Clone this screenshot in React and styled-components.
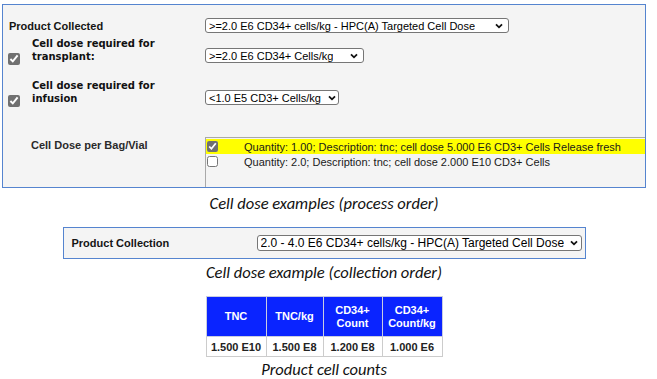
import React from "react";
import styled, { createGlobalStyle } from "styled-components";

const GlobalStyle = createGlobalStyle`
  html, body { margin: 0; padding: 0; background: #ffffff; }
  body { font-family: "Liberation Sans", Arial, sans-serif; color: #111; }
`;

const Page = styled.div`
  width: 644px;
  padding: 4px 0 0 2px;
  display: flex;
  flex-direction: column;
  align-items: center;
`;

const Panel = styled.div`
  box-sizing: border-box;
  width: ${(p) => p.$w}px;
  height: ${(p) => p.$h}px;
  border: 1px solid #5584cf;
  background: #f4f4f4;
  margin-top: ${(p) => p.$mt || 0}px;
  display: flex;
  flex-direction: column;
`;

const Row = styled.div`
  display: grid;
  grid-template-columns: 202px auto;
  align-items: ${(p) => p.$align || "start"};
  justify-items: start;
  margin-top: ${(p) => p.$mt}px;
  ${(p) => (p.$grow ? "flex: 1; align-items: stretch; justify-items: stretch;" : "")}
`;

const PlainLabel = styled.div`
  font-size: 11px;
  font-weight: bold;
  color: ${(p) => p.$color || "#151515"};
  padding-left: ${(p) => p.$pl}px;
  padding-top: ${(p) => p.$pt || 0}px;
  line-height: 14px;
`;

const CheckLabel = styled.div`
  display: flex;
  align-items: flex-end;
  padding-left: 5px;
  gap: 12px;
`;

const Check = styled.input.attrs({ type: "checkbox", readOnly: true })`
  width: 12px;
  height: 12px;
  margin: 0 0 -2px 0;
  accent-color: #707070;
  flex-shrink: 0;
`;

const VerdanaText = styled.div`
  font-family: "DejaVu Sans", Verdana, sans-serif;
  font-weight: bold;
  font-size: 10px;
  line-height: 12.5px;
  color: #111;
`;

const SelectBox = styled.div`
  box-sizing: border-box;
  display: flex;
  align-items: center;
  justify-content: space-between;
  font-family: "Liberation Sans", Arial, sans-serif;
  font-size: ${(p) => p.$fs || 11}px;
  color: #000;
  background: #fff;
  width: ${(p) => p.$w}px;
  height: ${(p) => p.$h || 15}px;
  margin-top: ${(p) => p.$mt || 0}px;
  padding: 0 ${(p) => p.$pr || 4}px 0 3px;
  border: 1px solid #767676;
  border-radius: 3px;
  white-space: nowrap;
  overflow: hidden;
`;

const SelectText = styled.span`
  min-width: 0;
  overflow: hidden;
`;

const Chevron = () => (
  <svg width="8" height="6" viewBox="0 0 8 6" aria-hidden="true" style={{ flexShrink: 0 }}>
    <path d="M1 1.3 L4 4.3 L7 1.3" fill="none" stroke="#111" strokeWidth="1.8" />
  </svg>
);

const Dropdown = ({ children, ...rest }) => (
  <SelectBox role="combobox" {...rest}>
    <SelectText>{children}</SelectText>
    <Chevron />
  </SelectBox>
);

const ListBox = styled.div`
  border-top: 1px solid #a9a9a9;
  border-left: 1px solid #a9a9a9;
  padding-top: 1px;
  display: flex;
  flex-direction: column;
`;

const ListItem = styled.div`
  display: flex;
  align-items: center;
  height: 15px;
  background: ${(p) => (p.$selected ? "#ffff00" : "transparent")};
`;

const ItemCheck = styled.input.attrs({ type: "checkbox", readOnly: true })`
  width: 11px;
  height: 11px;
  margin: 0 0 0 1px;
  accent-color: #707070;
`;

const ItemText = styled.span`
  font-size: 11px;
  color: #1a1a1a;
  margin-left: 26px;
  white-space: nowrap;
`;

const Caption = styled.div`
  font-family: Carlito, Lato, "Open Sans", sans-serif;
  font-style: italic;
  font-size: 16.5px;
  line-height: 20px;
  color: #111;
  margin-top: ${(p) => p.$mt}px;
`;

const CollectionRow = styled.div`
  display: grid;
  grid-template-columns: 185px auto;
  align-items: center;
  height: 100%;
  padding-left: 8px;
`;

const Table = styled.table`
  border-collapse: collapse;
  border: 1px solid #5b79c6;
  margin-top: 14px;
  font-family: "Liberation Sans", Arial, sans-serif;
  font-size: 11px;
  font-weight: bold;
`;

const Th = styled.th`
  background: #0a24ff;
  color: #fff;
  height: 39px;
  width: ${(p) => p.$w}px;
  border: 1px solid #c9cde0;
  line-height: 13px;
  padding: 0;
  font-weight: bold;
`;

const Td = styled.td`
  height: 19px;
  border: 1px solid #cccccc;
  text-align: center;
  color: #222;
  padding: 0;
  white-space: nowrap;
`;

export default function App() {
  return (
    <>
      <GlobalStyle />
      <Page>
        <Panel $w={644} $h={184}>
          <Row $mt={13} $align="center">
            <PlainLabel $pl={6}>Product Collected</PlainLabel>
            <Dropdown $w={304} $pr={5}>
              &gt;=2.0 E6 CD34+ cells/kg - HPC(A) Targeted Cell Dose
            </Dropdown>
          </Row>
          <Row $mt={5}>
            <CheckLabel>
              <Check checked />
              <VerdanaText>
                Cell dose required for
                <br />
                transplant:
              </VerdanaText>
            </CheckLabel>
            <Dropdown $w={159} $mt={10} $pr={5}>
              &gt;=2.0 E6 CD34+ Cells/kg
            </Dropdown>
          </Row>
          <Row $mt={17}>
            <CheckLabel>
              <Check checked />
              <VerdanaText>
                Cell dose required for
                <br />
                infusion
              </VerdanaText>
            </CheckLabel>
            <Dropdown $w={134} $mt={10} $pr={2}>
              &lt;1.0 E5 CD3+ Cells/kg
            </Dropdown>
          </Row>
          <Row $mt={32} $grow>
            <PlainLabel $pl={28} $pt={1} $color="#2a2a2a">
              Cell Dose per Bag/Vial
            </PlainLabel>
            <ListBox>
              <ListItem $selected>
                <ItemCheck checked />
                <ItemText>
                  Quantity: 1.00; Description: tnc; cell dose 5.000 E6 CD3+ Cells Release fresh
                </ItemText>
              </ListItem>
              <ListItem>
                <ItemCheck />
                <ItemText>Quantity: 2.0; Description: tnc; cell dose 2.000 E10 CD3+ Cells</ItemText>
              </ListItem>
            </ListBox>
          </Row>
        </Panel>
        <Caption $mt={5}>Cell dose examples (process order)</Caption>
        <Panel $w={523} $h={32} $mt={14}>
          <CollectionRow>
            <PlainLabel $pl={0}>Product Collection</PlainLabel>
            <Dropdown $w={325} $h={16} $fs={12} $pr={3}>
              2.0 - 4.0 E6 CD34+ cells/kg - HPC(A) Targeted Cell Dose
            </Dropdown>
          </CollectionRow>
        </Panel>
        <Caption $mt={3}>Cell dose example (collection order)</Caption>
        <Table>
          <thead>
            <tr>
              <Th $w={59}>TNC</Th>
              <Th $w={56}>TNC/kg</Th>
              <Th $w={58}>
                CD34+
                <br />
                Count
              </Th>
              <Th $w={59}>
                CD34+
                <br />
                Count/kg
              </Th>
            </tr>
          </thead>
          <tbody>
            <tr>
              <Td>1.500 E10</Td>
              <Td>1.500 E8</Td>
              <Td>1.200 E8</Td>
              <Td>1.000 E6</Td>
            </tr>
          </tbody>
        </Table>
        <Caption $mt={2}>Product cell counts</Caption>
      </Page>
    </>
  );
}
